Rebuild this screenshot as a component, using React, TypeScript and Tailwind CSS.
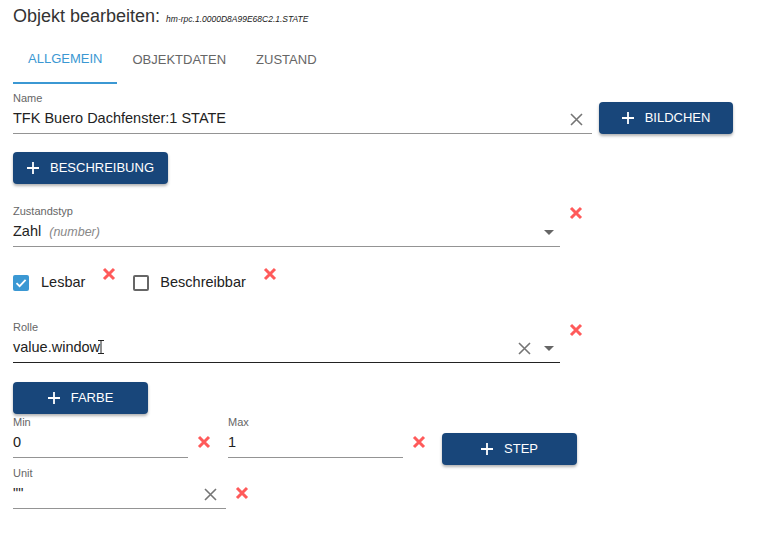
import type { ReactNode } from "react";

const font = "font-['Liberation_Sans',Arial,sans-serif]";

function RedX() {
  return (
    <svg width="14" height="14" viewBox="0 0 14 14" className="shrink-0">
      <path d="M2 2L12 12M12 2L2 12" stroke="#ff5a5a" strokeWidth="3" />
    </svg>
  );
}

function ClearX() {
  return (
    <svg width="13" height="13" viewBox="0 0 13 13" className="shrink-0">
      <path d="M1 1L12 12M12 1L1 12" stroke="#757575" strokeWidth="1.6" />
    </svg>
  );
}

function Arrow() {
  return (
    <svg width="10" height="5" viewBox="7 10 10 5" className="shrink-0">
      <path d="M7 10l5 5 5-5z" fill="#666" />
    </svg>
  );
}

function Plus() {
  return (
    <svg width="12" height="12" viewBox="0 0 12 12" className="shrink-0">
      <path d="M6 0V12M0 6H12" stroke="#fff" strokeWidth="1.8" />
    </svg>
  );
}

function Btn({ label, w }: { label: string; w: string }) {
  return (
    <div
      className={`${w} h-[32px] shrink-0 rounded-[4px] bg-[#18467a] text-white text-[13px] flex items-center justify-center gap-[11px] shadow-[0_2px_3px_rgba(0,0,0,0.3)]`}
    >
      <Plus />
      <span>{label}</span>
    </div>
  );
}

function Field({
  label,
  w,
  dark = false,
  children,
  icons,
}: {
  label: string;
  w: string;
  dark?: boolean;
  children: ReactNode;
  icons?: ReactNode;
}) {
  return (
    <div className={`${w} shrink-0`}>
      <div className="text-[11px] leading-[13px] text-[#666]">{label}</div>
      <div
        className={`h-[29px] flex items-center border-b ${
          dark ? "border-[#222]" : "border-[#949494]"
        }`}
      >
        <div className="flex-1 text-[14.5px] text-[#222] flex items-baseline">{children}</div>
        {icons}
      </div>
    </div>
  );
}

export default function App() {
  return (
    <div className={`w-[772px] h-[542px] bg-white pl-[13px] ${font} text-[#333] relative`}>
      <div className="h-[36px] pt-[5px] flex items-baseline">
        <span className="text-[18px] leading-[22px]">Objekt bearbeiten:</span>
        <span className="text-[8.5px] italic ml-[6px] text-[#222]">hm-rpc.1.0000D8A99E68C2.1.STATE</span>
      </div>

      <div className="h-[48px] flex text-[13px]">
        <div className="px-[15px] flex items-center border-b-2 border-[#3b98d3] text-[#3b98d3]">ALLGEMEIN</div>
        <div className="px-[15px] flex items-center text-[#666]">OBJEKTDATEN</div>
        <div className="px-[15px] flex items-center text-[#666]">ZUSTAND</div>
      </div>

      <div className="pt-[8px] flex items-start">
        <Field
          label="Name"
          w="w-[579px]"
          icons={
            <div className="mr-[9px] flex">
              <ClearX />
            </div>
          }
        >
          TFK Buero Dachfenster:1 STATE
        </Field>
        <div className="ml-[7px] mt-[10px]">
          <Btn label="BILDCHEN" w="w-[134px]" />
        </div>
      </div>

      <div className="mt-[18px]">
        <Btn label="BESCHREIBUNG" w="w-[155px]" />
      </div>

      <div className="mt-[21px] flex items-start">
        <Field
          label="Zustandstyp"
          w="w-[547px]"
          icons={
            <div className="mr-[6px] flex">
              <Arrow />
            </div>
          }
        >
          <span>Zahl</span>
          <span className="ml-[8px] text-[12.5px] italic text-[#888]">(number)</span>
        </Field>
        <div className="ml-[9px] mt-[1px]">
          <RedX />
        </div>
      </div>

      <div className="mt-[20px] h-[32px] flex items-center text-[14.5px] text-[#222]">
        <div className="w-[16px] h-[16px] rounded-[2px] bg-[#3b98d3] flex items-center justify-center">
          <svg width="12" height="12" viewBox="0 0 12 12">
            <path d="M1.5 6.2L4.6 9.2L10.6 2.8" stroke="#fff" strokeWidth="1.8" fill="none" />
          </svg>
        </div>
        <span className="ml-[12px]">Lesbar</span>
        <div className="ml-[17px] self-start">
          <RedX />
        </div>
        <div className="ml-[17px] w-[16px] h-[16px] rounded-[2px] border-2 border-[#666]" />
        <span className="ml-[11px]">Beschreibbar</span>
        <div className="ml-[17px] self-start">
          <RedX />
        </div>
      </div>

      <div className="mt-[22px] flex items-start">
        <Field
          label="Rolle"
          w="w-[547px]"
          dark
          icons={
            <div className="mr-[6px] flex items-center gap-[13px]">
              <ClearX />
              <Arrow />
            </div>
          }
        >
          value.window
        </Field>
        <div className="ml-[9px] mt-[2px]">
          <RedX />
        </div>
      </div>

      <div className="mt-[19px]">
        <Btn label="FARBE" w="w-[135px]" />
      </div>

      <div className="mt-[2px] flex items-start">
        <Field label="Min" w="w-[175px]">
          0
        </Field>
        <div className="ml-[9px] mt-[19px]">
          <RedX />
        </div>
        <div className="ml-[17px]">
          <Field label="Max" w="w-[175px]">
            1
          </Field>
        </div>
        <div className="ml-[9px] mt-[19px]">
          <RedX />
        </div>
        <div className="ml-[16px] mt-[17px]">
          <Btn label="STEP" w="w-[135px]" />
        </div>
      </div>

      <div className="mt-[2px] flex items-start">
        <Field
          label="Unit"
          w="w-[213px]"
          icons={
            <div className="mr-[9px] flex">
              <ClearX />
            </div>
          }
        >
          ""
        </Field>
        <div className="ml-[9px] mt-[19px]">
          <RedX />
        </div>
      </div>

      <svg width="6" height="14" viewBox="0 0 6 14" className="absolute left-[98px] top-[340px]">
        <path d="M0 0.5H6M0 13.5H6M3 0.5V13.5" stroke="#222" strokeWidth="1" fill="none" />
      </svg>
    </div>
  );
}
